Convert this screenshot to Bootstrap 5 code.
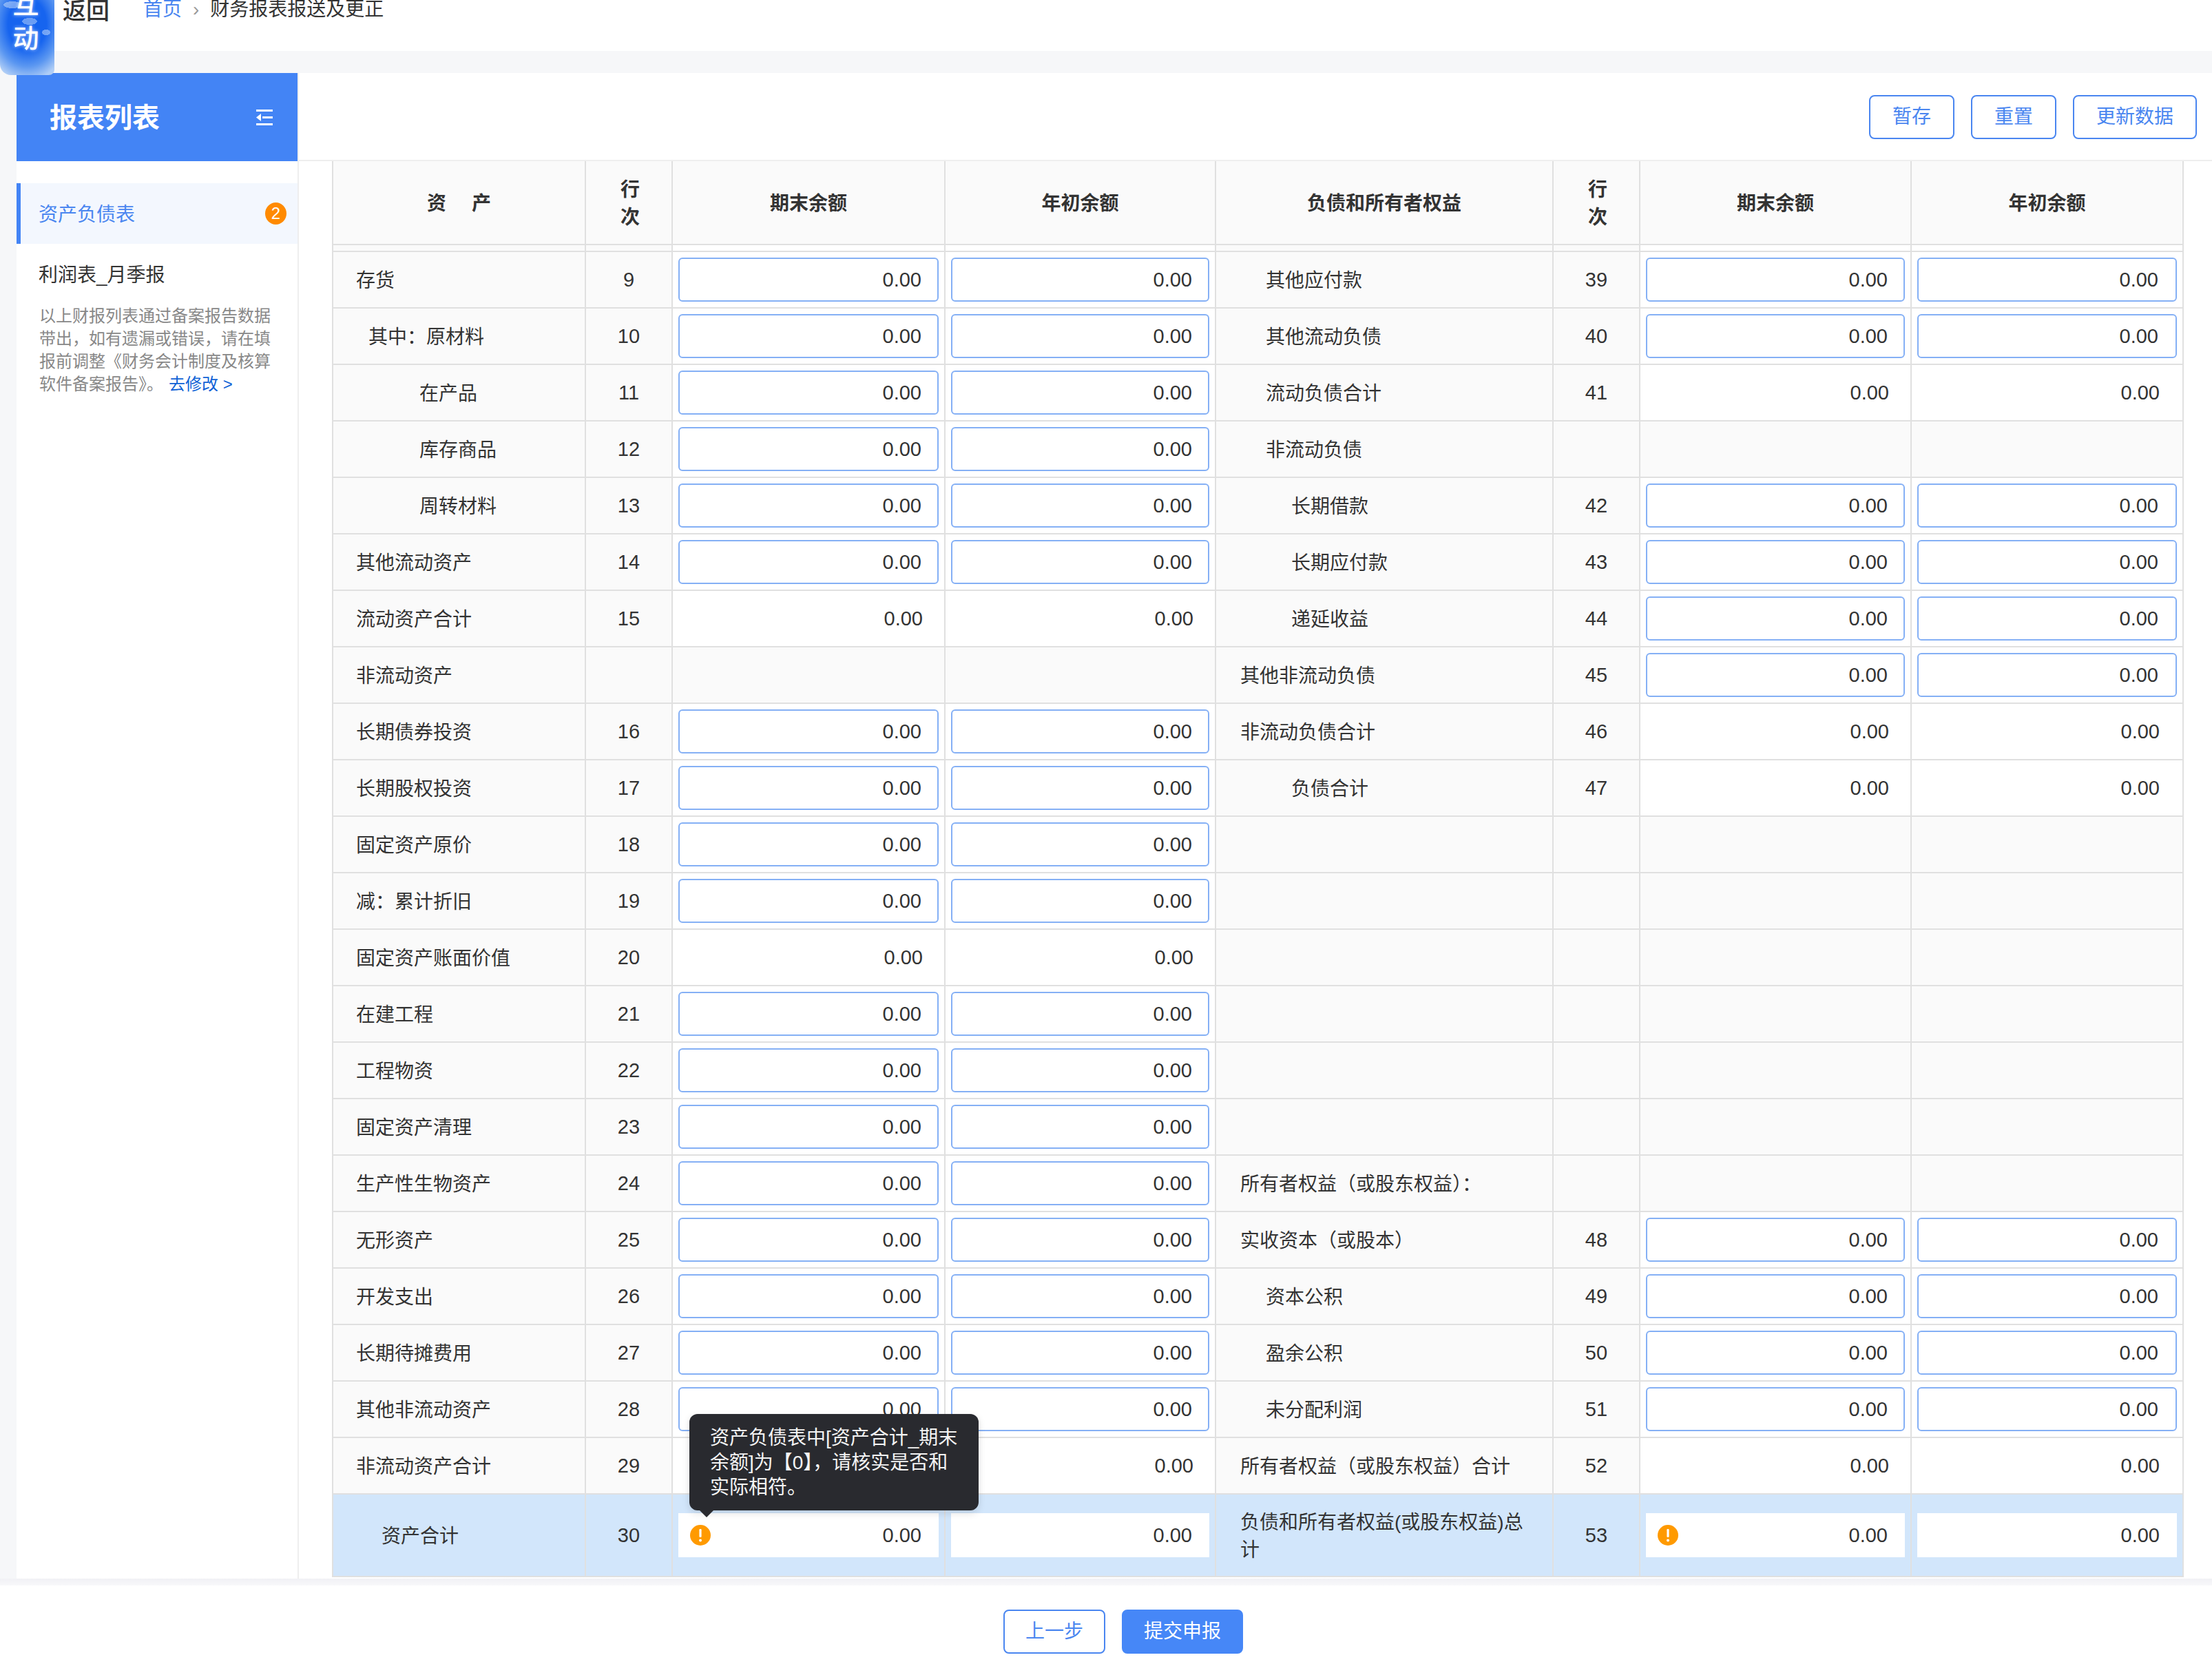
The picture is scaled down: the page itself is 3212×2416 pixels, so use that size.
<!DOCTYPE html>
<html lang="zh-CN">
<head>
<meta charset="utf-8">
<title>财务报表报送及更正</title>
<link href="https://cdn.jsdelivr.net/npm/bootstrap@5.3.0/dist/css/bootstrap.min.css" rel="stylesheet">
<style>
html,body{height:2416px;overflow:hidden}
body{background:#f6f7f9;color:#333;font-family:"Liberation Sans","Noto Sans CJK SC",sans-serif;font-size:28px}
.topbar{height:74px;background:#fff;padding-left:91px;overflow:hidden}
.backlink{font-size:34px;line-height:32px;color:#333;font-weight:500;margin-right:49px}
.crumbs{--bs-breadcrumb-margin-bottom:0;--bs-breadcrumb-item-padding-x:16px;--bs-breadcrumb-divider-color:#999;--bs-breadcrumb-item-active-color:#333;--bs-breadcrumb-divider:'›';line-height:28px;font-size:28px}
.crumbs a{color:#4a86f0;text-decoration:none}
.floatmark{position:absolute;left:0;top:0;width:79px;height:109px;overflow:hidden;border-radius:0 0 8px 16px;color:#fff;font-size:38px;line-height:50px;font-weight:500;padding:0 4px 28px 0;text-shadow:0 0 5px rgba(255,255,255,.7);z-index:5;
background:radial-gradient(ellipse 13px 5px at 18px 7px,rgba(190,215,250,.55) 98%,transparent),radial-gradient(ellipse 11px 5px at 43px 31px,rgba(190,215,250,.5) 98%,transparent),radial-gradient(ellipse 6px 4px at 67px 47px,rgba(190,215,250,.55) 98%,transparent),radial-gradient(ellipse 62px 82px at 50% 32%,#1664ef 45%,#5b97f1 75%,#afcdf6 100%)}
.midgap{height:32px}
.workarea{height:2186px;padding-left:24px}
.sidepane{width:408px;background:#fff;flex:none}
.sidehead{height:128px;background:#4384f5;color:#fff;padding:2px 36px 0 48px}
.sidehead h2{font-size:40px;font-weight:700;margin:0;line-height:1}
.sidehead svg{margin-top:-2px}
.sidemenu{margin-top:32px}
.sidemenu .list-group-item{height:88px;border:0;border-radius:0;padding:4px 16px 0 32px;font-size:28px;color:#333;background:#fff}
.sidemenu .list-group-item.active{background:#f3f7fe;color:#4a86f0;border-left:6px solid #4384f5;padding-left:26px;margin:0}
.countdot{width:31px;height:32px;border-radius:50%;background:#ff8a00;color:#fff;font-size:24px;line-height:32px;text-align:center;margin-top:-4px}
.sidenote{padding-left:33px;font-size:24px;line-height:33px;color:#888;white-space:nowrap}
.sidenote a{color:#0f62d6;text-decoration:none;margin-left:8px}
.mainpane{background:#fff;border-left:2px solid #eee;min-width:0}
.toolrow{height:128px;border-bottom:2px solid #eee;padding:6px 22px 4px 0;gap:24px}
.pillbtn{--bs-btn-color:#4a86f0;--bs-btn-border-color:#4a86f0;--bs-btn-hover-bg:#4a86f0;--bs-btn-hover-border-color:#4a86f0;--bs-btn-font-size:28px;--bs-btn-line-height:1;--bs-btn-border-width:2px;--bs-btn-border-radius:8px;--bs-btn-padding-x:32px;--bs-btn-padding-y:0;height:64px}
.footbtn{--bs-btn-padding-x:30px}
.solidbtn{--bs-btn-color:#fff;--bs-btn-bg:#4687f7;--bs-btn-border-color:#4687f7}
.tablewrap{padding:0 42px 0 48px}
.sheet{--bs-border-width:2px;--bs-table-border-color:#e0e0e0;--bs-table-color:#333;width:2687px;table-layout:fixed;margin:0;font-size:28px;line-height:40px;border-top-width:0}
.sheet th:nth-child(1),.sheet td:nth-child(1){width:367px}
.sheet th:nth-child(2),.sheet td:nth-child(2),.sheet th:nth-child(6),.sheet td:nth-child(6){width:126px}
.sheet th:nth-child(3),.sheet td:nth-child(3){width:396px}
.sheet th:nth-child(8),.sheet td:nth-child(8){width:395px}
.sheet th:nth-child(4),.sheet td:nth-child(4){width:393px}
.sheet th:nth-child(5),.sheet td:nth-child(5){width:490px}
.sheet th:nth-child(7),.sheet td:nth-child(7){width:394px}
.sheet>thead>tr{border-top-width:0}
.sheet>thead>tr>th{height:121px;padding:4px 0 0;text-align:center;vertical-align:middle;font-weight:700;--bs-table-bg:#fafafa;border-top-width:0}
.sheet>thead>tr>th.rowhead{padding-left:4px}
.sheet>tbody>tr>td{height:82px;padding:0 8px;vertical-align:middle}
.sheet>tbody>tr.spacer>td{height:10px;padding:0;line-height:1;font-size:1px}
.sheet>tbody>tr>td.lb{--bs-table-bg:#fafafa;padding-left:33px;padding-top:4px;white-space:nowrap}
.sheet>tbody>tr>td.lr{padding-left:35px}
.sheet>tbody>tr>td.nm{--bs-table-bg:#fafafa;text-align:center;font-size:29px}
.sheet>tbody>tr>td.vt{text-align:right;padding-right:31px;font-size:29px}
.sheet>tbody>tr>td.vt:last-child{padding-right:33px}
.sheet>tbody>tr>td.ve{--bs-table-bg:#fafafa}
.sheet>tbody>tr>td.i19{padding-left:51px}
.sheet>tbody>tr>td.i37{padding-left:70px}
.sheet>tbody>tr>td.i39{padding-left:72px}
.sheet>tbody>tr>td.i76{padding-left:109px}
.sheet>tbody>tr>td.i92{padding-left:125px}
.sheet>tbody>tr.sumrow>td{--bs-table-bg:#d2e6fb;height:120px}
.gapr{margin-left:37px}
.amount{height:64px;border:2px solid #85b0f5;border-radius:6px;text-align:right;font-size:29px;color:#333;padding:0 23px 0 0;background:#fff;line-height:1}
td:last-child .amount{padding-right:25px}
.sumrow .amount{border:0;border-radius:0;padding-right:25px}
.fieldhold{position:relative}
.alerticon{position:absolute;left:17px;top:17px;width:30px;height:30px}
.tipbox{position:absolute;left:16px;top:-144px;width:420px;height:140px;background:#292a2f;border-radius:12px;color:#f4f4f4;font-size:28px;line-height:36px;padding:17px 30px 0;white-space:nowrap;box-shadow:0 4px 12px rgba(0,0,0,.12);z-index:4}
.tipbox::after{content:"";position:absolute;left:15px;bottom:-10px;border-left:10px solid transparent;border-right:10px solid transparent;border-top:10px solid #292a2f}
.footzone{height:124px;padding:45px 0 0 50px;gap:24px;background:linear-gradient(#f1f1f5,#f8f8fa 10px,#fff 10px)}
</style>
</head>
<body>
<div class="floatmark d-flex flex-column justify-content-end align-items-center"><div>互</div><div>动</div></div>
<header class="topbar d-flex align-items-start">
  <span class="backlink">返回</span>
  <nav aria-label="breadcrumb">
    <ol class="breadcrumb crumbs">
      <li class="breadcrumb-item"><a href="#">首页</a></li>
      <li class="breadcrumb-item active" aria-current="page">财务报表报送及更正</li>
    </ol>
  </nav>
</header>
<div class="midgap"></div>
<div class="workarea d-flex">
  <aside class="sidepane">
    <div class="sidehead d-flex align-items-center justify-content-between">
      <h2>报表列表</h2>
      <svg width="24" height="24" viewBox="0 0 24 24" fill="#fff"><rect x="0" y="1" width="24" height="3"/><rect x="9" y="11" width="15" height="3"/><rect x="0" y="21" width="24" height="3"/><path d="M0 12.5 7 7v11z"/></svg>
    </div>
    <div class="list-group sidemenu">
      <div class="list-group-item active d-flex align-items-center justify-content-between">资产负债表<span class="countdot">2</span></div>
      <div class="list-group-item d-flex align-items-center">利润表_月季报</div>
    </div>
    <div class="sidenote">以上财报列表通过备案报告数据<br>带出，如有遗漏或错误，请在填<br>报前调整《财务会计制度及核算<br>软件备案报告》。<a href="#">去修改 &gt;</a></div>
  </aside>
  <main class="mainpane flex-grow-1">
    <div class="toolrow d-flex align-items-center justify-content-end">
      <button class="btn btn-outline-primary pillbtn">暂存</button>
      <button class="btn btn-outline-primary pillbtn">重置</button>
      <button class="btn btn-outline-primary pillbtn">更新数据</button>
    </div>
    <div class="tablewrap">
      <table class="table table-bordered sheet">
        <thead>
          <tr><th>资<span class="gapr">产</span></th><th class="rowhead">行<br>次</th><th>期末余额</th><th>年初余额</th><th>负债和所有者权益</th><th class="rowhead">行<br>次</th><th>期末余额</th><th>年初余额</th></tr>
        </thead>
        <tbody>
          <tr class="spacer"><td class="lb"></td><td class="nm"></td><td></td><td></td><td class="lb"></td><td class="nm"></td><td></td><td></td></tr>
          <tr><td class="lb">存货</td><td class="nm">9</td><td><input class="form-control amount" value="0.00"></td><td><input class="form-control amount" value="0.00"></td><td class="lb i39">其他应付款</td><td class="nm">39</td><td><input class="form-control amount" value="0.00"></td><td><input class="form-control amount" value="0.00"></td></tr>
          <tr><td class="lb i19">其中：原材料</td><td class="nm">10</td><td><input class="form-control amount" value="0.00"></td><td><input class="form-control amount" value="0.00"></td><td class="lb i39">其他流动负债</td><td class="nm">40</td><td><input class="form-control amount" value="0.00"></td><td><input class="form-control amount" value="0.00"></td></tr>
          <tr><td class="lb i92">在产品</td><td class="nm">11</td><td><input class="form-control amount" value="0.00"></td><td><input class="form-control amount" value="0.00"></td><td class="lb i39">流动负债合计</td><td class="nm">41</td><td class="vt">0.00</td><td class="vt">0.00</td></tr>
          <tr><td class="lb i92">库存商品</td><td class="nm">12</td><td><input class="form-control amount" value="0.00"></td><td><input class="form-control amount" value="0.00"></td><td class="lb i39">非流动负债</td><td class="nm"></td><td class="ve"></td><td class="ve"></td></tr>
          <tr><td class="lb i92">周转材料</td><td class="nm">13</td><td><input class="form-control amount" value="0.00"></td><td><input class="form-control amount" value="0.00"></td><td class="lb i76">长期借款</td><td class="nm">42</td><td><input class="form-control amount" value="0.00"></td><td><input class="form-control amount" value="0.00"></td></tr>
          <tr><td class="lb">其他流动资产</td><td class="nm">14</td><td><input class="form-control amount" value="0.00"></td><td><input class="form-control amount" value="0.00"></td><td class="lb i76">长期应付款</td><td class="nm">43</td><td><input class="form-control amount" value="0.00"></td><td><input class="form-control amount" value="0.00"></td></tr>
          <tr><td class="lb">流动资产合计</td><td class="nm">15</td><td class="vt">0.00</td><td class="vt">0.00</td><td class="lb i76">递延收益</td><td class="nm">44</td><td><input class="form-control amount" value="0.00"></td><td><input class="form-control amount" value="0.00"></td></tr>
          <tr><td class="lb">非流动资产</td><td class="nm"></td><td class="ve"></td><td class="ve"></td><td class="lb lr">其他非流动负债</td><td class="nm">45</td><td><input class="form-control amount" value="0.00"></td><td><input class="form-control amount" value="0.00"></td></tr>
          <tr><td class="lb">长期债券投资</td><td class="nm">16</td><td><input class="form-control amount" value="0.00"></td><td><input class="form-control amount" value="0.00"></td><td class="lb lr">非流动负债合计</td><td class="nm">46</td><td class="vt">0.00</td><td class="vt">0.00</td></tr>
          <tr><td class="lb">长期股权投资</td><td class="nm">17</td><td><input class="form-control amount" value="0.00"></td><td><input class="form-control amount" value="0.00"></td><td class="lb i76">负债合计</td><td class="nm">47</td><td class="vt">0.00</td><td class="vt">0.00</td></tr>
          <tr><td class="lb">固定资产原价</td><td class="nm">18</td><td><input class="form-control amount" value="0.00"></td><td><input class="form-control amount" value="0.00"></td><td class="lb"></td><td class="nm"></td><td class="ve"></td><td class="ve"></td></tr>
          <tr><td class="lb">减：累计折旧</td><td class="nm">19</td><td><input class="form-control amount" value="0.00"></td><td><input class="form-control amount" value="0.00"></td><td class="lb"></td><td class="nm"></td><td class="ve"></td><td class="ve"></td></tr>
          <tr><td class="lb">固定资产账面价值</td><td class="nm">20</td><td class="vt">0.00</td><td class="vt">0.00</td><td class="lb"></td><td class="nm"></td><td class="ve"></td><td class="ve"></td></tr>
          <tr><td class="lb">在建工程</td><td class="nm">21</td><td><input class="form-control amount" value="0.00"></td><td><input class="form-control amount" value="0.00"></td><td class="lb"></td><td class="nm"></td><td class="ve"></td><td class="ve"></td></tr>
          <tr><td class="lb">工程物资</td><td class="nm">22</td><td><input class="form-control amount" value="0.00"></td><td><input class="form-control amount" value="0.00"></td><td class="lb"></td><td class="nm"></td><td class="ve"></td><td class="ve"></td></tr>
          <tr><td class="lb">固定资产清理</td><td class="nm">23</td><td><input class="form-control amount" value="0.00"></td><td><input class="form-control amount" value="0.00"></td><td class="lb"></td><td class="nm"></td><td class="ve"></td><td class="ve"></td></tr>
          <tr><td class="lb">生产性生物资产</td><td class="nm">24</td><td><input class="form-control amount" value="0.00"></td><td><input class="form-control amount" value="0.00"></td><td class="lb lr">所有者权益（或股东权益）：</td><td class="nm"></td><td class="ve"></td><td class="ve"></td></tr>
          <tr><td class="lb">无形资产</td><td class="nm">25</td><td><input class="form-control amount" value="0.00"></td><td><input class="form-control amount" value="0.00"></td><td class="lb lr">实收资本（或股本）</td><td class="nm">48</td><td><input class="form-control amount" value="0.00"></td><td><input class="form-control amount" value="0.00"></td></tr>
          <tr><td class="lb">开发支出</td><td class="nm">26</td><td><input class="form-control amount" value="0.00"></td><td><input class="form-control amount" value="0.00"></td><td class="lb i39">资本公积</td><td class="nm">49</td><td><input class="form-control amount" value="0.00"></td><td><input class="form-control amount" value="0.00"></td></tr>
          <tr><td class="lb">长期待摊费用</td><td class="nm">27</td><td><input class="form-control amount" value="0.00"></td><td><input class="form-control amount" value="0.00"></td><td class="lb i39">盈余公积</td><td class="nm">50</td><td><input class="form-control amount" value="0.00"></td><td><input class="form-control amount" value="0.00"></td></tr>
          <tr><td class="lb">其他非流动资产</td><td class="nm">28</td><td><input class="form-control amount" value="0.00"></td><td><input class="form-control amount" value="0.00"></td><td class="lb i39">未分配利润</td><td class="nm">51</td><td><input class="form-control amount" value="0.00"></td><td><input class="form-control amount" value="0.00"></td></tr>
          <tr><td class="lb">非流动资产合计</td><td class="nm">29</td><td class="vt">0.00</td><td class="vt">0.00</td><td class="lb lr">所有者权益（或股东权益）合计</td><td class="nm">52</td><td class="vt">0.00</td><td class="vt">0.00</td></tr>
          <tr class="sumrow">
            <td class="lb i37">资产合计</td><td class="nm">30</td>
            <td><div class="fieldhold"><input class="form-control amount" value="0.00">
              <svg class="alerticon" viewBox="0 0 30 30"><circle cx="15" cy="15" r="15" fill="#ff9a00"/><rect x="13.4" y="6" width="3.2" height="12" rx="1.2" fill="#fff"/><circle cx="15" cy="22.5" r="2" fill="#fff"/></svg>
              <div class="tipbox">资产负债表中[资产合计_期末<br>余额]为【0】，请核实是否和<br>实际相符。</div></div></td>
            <td><input class="form-control amount" value="0.00"></td>
            <td class="lb lr">负债和所有者权益(或股东权益)总<br>计</td><td class="nm">53</td>
            <td><div class="fieldhold"><input class="form-control amount" value="0.00">
              <svg class="alerticon" viewBox="0 0 30 30"><circle cx="15" cy="15" r="15" fill="#ff9a00"/><rect x="13.4" y="6" width="3.2" height="12" rx="1.2" fill="#fff"/><circle cx="15" cy="22.5" r="2" fill="#fff"/></svg></div></td>
            <td><input class="form-control amount" value="0.00"></td>
          </tr>
        </tbody>
      </table>
    </div>
  </main>
</div>
<footer class="footzone d-flex justify-content-center align-items-start">
  <button class="btn btn-outline-primary pillbtn footbtn">上一步</button>
  <button class="btn btn-primary pillbtn footbtn solidbtn">提交申报</button>
</footer>
</body>
</html>
